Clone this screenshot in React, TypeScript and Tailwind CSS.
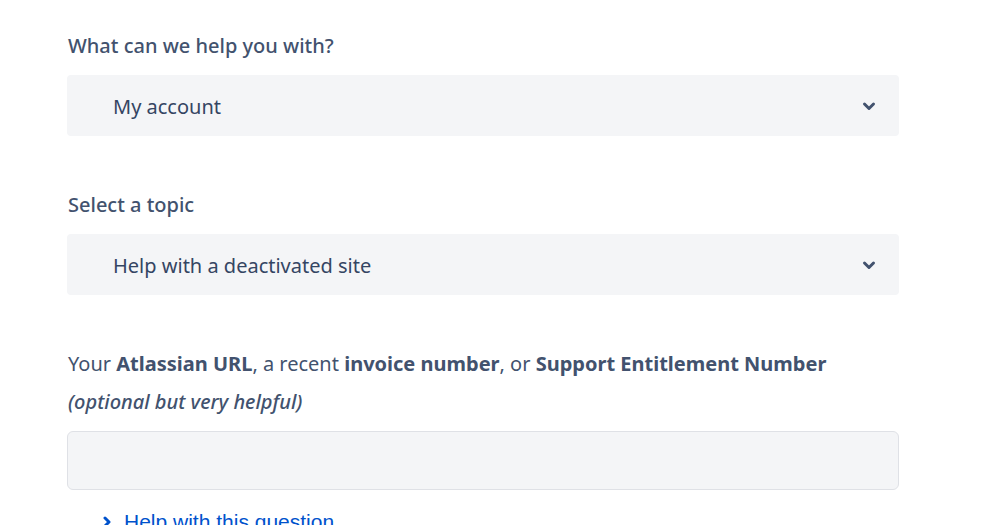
import React from 'react';

const ChevronDown: React.FC = () => (
  <svg width="14" height="14" viewBox="0 0 14 14" fill="none" stroke="#42526E" strokeWidth="3" strokeLinecap="round" strokeLinejoin="round">
    <path d="M2.5 5l4.5 4.5 4.5-4.5" />
  </svg>
);

const SelectBox: React.FC<{ value: string }> = ({ value }) => (
  <div className="flex items-center justify-between h-[61px] w-[832px] bg-[#f4f5f7] rounded-[4px] pl-[46px] pr-[23px] cursor-pointer">
    <span className="text-[20px] text-[#344563] pt-[3px]">{value}</span>
    <ChevronDown />
  </div>
);

export default function App() {
  return (
    <div className="min-h-screen bg-white font-['Noto_Sans',sans-serif] text-[#42526e] pl-[67px] pt-[31px]">
      <label className="block text-[20px] font-medium text-[#42526e] leading-[30px] pl-[1px]">
        What can we help you with?
      </label>
      <div className="mt-[14px]">
        <SelectBox value="My account" />
      </div>

      <label className="block mt-[54px] text-[20px] font-medium leading-[30px] pl-[1px]">
        Select a topic
      </label>
      <div className="mt-[14px]">
        <SelectBox value="Help with a deactivated site" />
      </div>

      <div className="mt-[50px] text-[20px] leading-[38px] pl-[1px]">
        <div>
          Your <span className="font-bold">Atlassian URL</span>, a recent{' '}
          <span className="font-bold">invoice number</span>, or{' '}
          <span className="font-bold">Support Entitlement Number</span>
        </div>
        <div className="italic font-medium">(optional but very helpful)</div>
      </div>

      <div className="mt-[10px] h-[59px] w-[832px] bg-[#f4f5f7] border border-[#dfe1e6] rounded-[6px]" />

      <div className="flex items-center gap-[12px] mt-[16px] pl-[35px] font-['Liberation_Sans',sans-serif] text-[21px] text-[#0052cc]">
        <svg width="10" height="12" viewBox="0 0 10 12" fill="none" stroke="#0052CC" strokeWidth="3" strokeLinecap="round" strokeLinejoin="round">
          <path d="M3 2l4 4-4 4" />
        </svg>
        <span>Help with this question</span>
      </div>
    </div>
  );
}
